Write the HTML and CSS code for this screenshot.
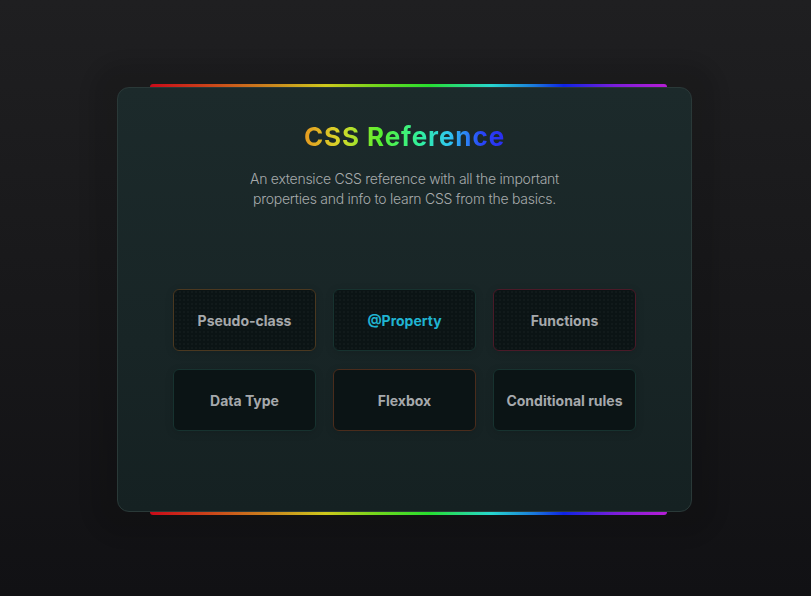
FILE: index.html
```html
<!DOCTYPE html>
<html lang="en">
<head>
<meta charset="utf-8">
<title>CSS Reference</title>
<link rel="stylesheet" href="styles.css">
</head>
<body>
<main class="card">
  <h1 class="title">CSS Reference</h1>
  <p class="subtitle">An extensice CSS reference with all the important<br>properties and info to learn CSS from the basics.</p>
  <nav class="grid">
    <a class="item dotted b-orange">Pseudo-class</a>
    <a class="item dotted b-teal active">@Property</a>
    <a class="item dotted b-red">Functions</a>
    <a class="item b-teal">Data Type</a>
    <a class="item b-brown">Flexbox</a>
    <a class="item b-teal">Conditional rules</a>
  </nav>
</main>
</body>
</html>
```

FILE: styles.css
```css
* { box-sizing: border-box; }
html, body { margin: 0; height: 100%; }
body {
  min-height: 100vh;
  background: linear-gradient(180deg, #1f1f21 0%, #18181a 50%, #111114 100%);
  display: flex;
  align-items: center;
  justify-content: center;
  font-family: Inter, "Noto Sans", sans-serif;
}
.card {
  position: relative;
  width: 575px;
  height: 425px;
  margin-left: -2px;
  margin-top: 3px;
  border: 1px solid #2a3938;
  border-radius: 12px;
  background: linear-gradient(180deg, #1c2a2b 0%, #182526 60%, #152122 100%);
  box-shadow: 0 0 14px 26px rgba(0, 0, 0, 0.1);
  padding-top: 33px;
  display: flex;
  flex-direction: column;
  align-items: center;
}
.card::before, .card::after {
  content: "";
  position: absolute;
  left: 32px;
  right: 24px;
  height: 4px;
  background: linear-gradient(90deg, #e00c1c 0%, #e2501e 12%, #e39a22 24%, #e6e020 34%, #7ef020 44%, #2cf835 54%, #2cf0e6 66%, #1e8cf5 74%, #1028ff 80%, #8a22f4 90%, #cc22ee 100%);
  z-index: -1;
}
.card::before { top: -4px; border-radius: 3px 3px 0 0; }
.card::after { bottom: -4px; border-radius: 0 0 3px 3px; }
.title {
  margin: 0;
  font-size: 26px;
  line-height: 32px;
  font-weight: 700;
  letter-spacing: 0.9px;
  background: linear-gradient(90deg, #e69a20 0%, #d8d82a 18%, #58f030 38%, #30f0a0 58%, #30c8f0 72%, #2848f8 88%, #2a2cf0 100%);
  -webkit-background-clip: text;
  background-clip: text;
  color: transparent;
}
.subtitle {
  margin: 16px 0 0;
  font-size: 14px;
  line-height: 20px;
  font-weight: 300;
  letter-spacing: -0.26px;
  color: #a7abac;
  text-align: center;
}
.grid {
  margin-top: 80px;
  display: grid;
  grid-template-columns: repeat(3, 143px);
  grid-auto-rows: 62px;
  column-gap: 17px;
  row-gap: 18px;
}
.item {
  display: flex;
  align-items: center;
  justify-content: center;
  border: 1px solid #1a3331;
  border-radius: 6px;
  background-color: #0b1415;
  color: #a6a9ac;
  font-size: 14px;
  font-weight: 700;
  box-shadow: 0 2px 8px rgba(0, 0, 0, 0.12);
}
.dotted {
  background-image: radial-gradient(circle, rgba(255, 255, 255, 0.022) 0.8px, transparent 1px);
  background-size: 4px 4px;
}
.b-orange { border-color: #4a3820; }
.b-teal { border-color: #17322f; }
.b-red { border-color: #4a1a28; }
.b-brown { border-color: #4a2c1c; }
.active { color: #20b4d2; }
```
